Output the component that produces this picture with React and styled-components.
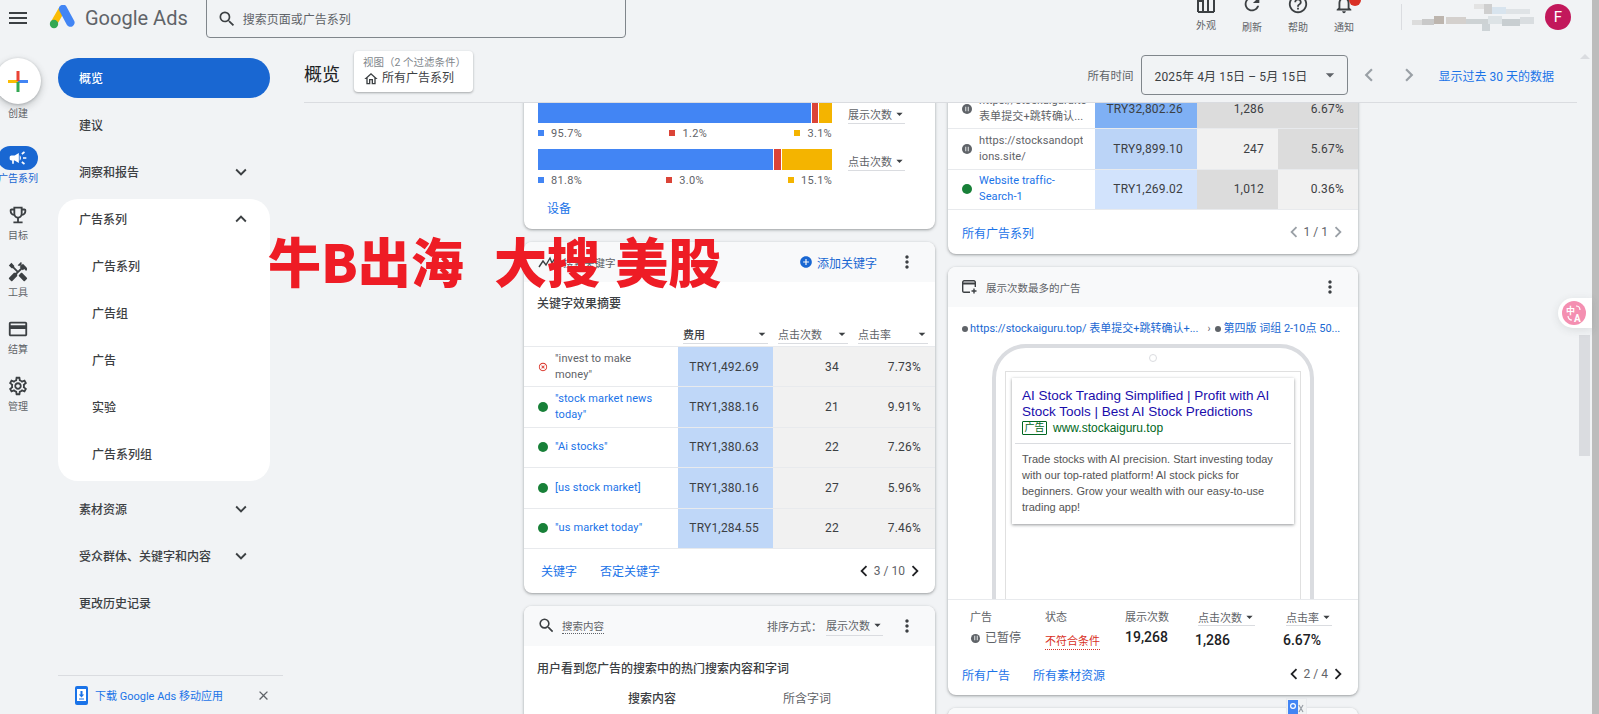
import styled, { createGlobalStyle } from 'styled-components';
import {
  MdMenu, MdSearch, MdExpandMore, MdExpandLess, MdCampaign, MdOutlineEmojiEvents, MdHandyman,
  MdOutlineCreditCard, MdOutlineSettings, MdOutlineHome, MdRefresh, MdHelpOutline,
  MdOutlineNotifications, MdMoreVert, MdAddCircle, MdChevronLeft, MdChevronRight,
  MdArrowDropDown, MdClose, MdHighlightOff, MdPause,
} from 'react-icons/md';

const FONT = `Roboto, "Noto Sans CJK SC", sans-serif`;

const GlobalStyle = createGlobalStyle`
  html, body { margin: 0; padding: 0; background: #f1f3f5; }
  body { font-family: ${FONT}; color: #3c4043; }
`;

//////// page shell ////////
const Page = styled.div`
  position: relative;
  display: flex;
  width: 1599px;
  height: 714px;
  overflow: hidden;
  background: #f1f3f5;
`;
const Viewport = styled.div`
  flex: 1;
  min-width: 0;
  display: flex;
  flex-direction: column;
`;
const BrowserScrollbar = styled.div`
  width: 7px;
  background: #bcbcbc;
`;
const ScrollThumb = styled.div`
  position: absolute;
  left: 1579px;
  top: 335px;
  width: 11px;
  height: 121px;
  background: #dadce0;
`;
const ScrollArrow = styled.div`
  position: absolute;
  left: 1580px;
  top: 54px;
  border: 5px solid transparent;
  border-top: 0;
  border-bottom: 5px solid #dadce0;
`;

//////// top bar ////////
const TopBar = styled.header`
  flex: none;
  height: 38px;
  display: flex;
  align-items: flex-start;
  padding-right: 21px;
`;
const MenuButton = styled.div`
  width: 24px;
  margin: 6px 0 0 6px;
  font-size: 24px;
  line-height: 0;
  color: #3c4043;
`;
const LogoWrap = styled.div`
  margin: 5px 0 0 19px;
  line-height: 0;
`;
const LogoText = styled.div`
  margin: 4px 0 0 10px;
  font-size: 20px;
  line-height: 28px;
  color: #5f6368;
`;
const SearchBox = styled.div`
  width: 420px;
  height: 39px;
  margin: -1px 0 0 18px;
  display: flex;
  align-items: center;
  gap: 6px;
  padding-left: 10px;
  box-sizing: border-box;
  border: 1px solid #80868b;
  border-radius: 0 0 4px 4px;
  font-size: 12px;
  color: #5f6368;
  svg { font-size: 20px; color: #3c4043; }
`;
const TopActions = styled.div`
  margin-left: auto;
  display: flex;
  align-items: flex-start;
`;
const TopAction = styled.div`
  position: relative;
  width: 46px;
  margin-top: -7px;
  display: flex;
  flex-direction: column;
  align-items: center;
  font-size: 10px;
  line-height: 14px;
  color: #5f6368;
  svg { font-size: 22px; color: #3c4043; margin-bottom: 6px; }
`;
const BellBadge = styled.span`
  position: absolute;
  left: 28px;
  top: 1px;
  width: 12px;
  height: 12px;
  border-radius: 50%;
  background: #d93025;
`;
const AccountDivider = styled.div`
  width: 1px;
  height: 26px;
  margin: 4px 10px 0 34px;
  background: #dadce0;
`;
const Avatar = styled.div`
  width: 26px;
  height: 26px;
  margin: 4px 0 0 9px;
  border-radius: 50%;
  background: #c2185b;
  color: #fff;
  font-size: 15px;
  line-height: 26px;
  text-align: center;
`;

//////// rail + nav ////////
const Body = styled.div`
  flex: 1;
  min-height: 0;
  display: flex;
`;
const Rail = styled.nav`
  flex: none;
  width: 58px;
  margin-left: -2px;
  margin-right: 2px;
  padding-top: 20px;
`;
const CreateButton = styled.div`
  width: 46px;
  height: 46px;
  margin-left: -3px;
  border-radius: 50%;
  background: #fff;
  box-shadow: 0 1px 3px rgba(60, 64, 67, .3), 0 3px 6px 2px rgba(60, 64, 67, .15);
  display: flex;
  align-items: center;
  justify-content: center;
`;
const RailLabel = styled.div`
  width: 40px;
  font-size: 10px;
  line-height: 18px;
  text-align: center;
  white-space: nowrap;
  color: ${(p) => (p.$active ? '#1967d2' : '#5f6368')};
`;
const CreateLabel = styled(RailLabel)`
  margin: 1px 0 23px;
`;
const RailItem = styled.div`
  height: 57px;
`;
const RailIcon = styled.div`
  width: 40px;
  height: 24px;
  border-radius: 12px;
  display: flex;
  align-items: center;
  justify-content: center;
  font-size: ${(p) => (p.$active ? '20px' : '22px')};
  color: ${(p) => (p.$active ? '#fff' : '#3c4043')};
  background: ${(p) => (p.$active ? '#1967d2' : 'transparent')};
`;
const Nav = styled.nav`
  flex: none;
  width: 225px;
  padding-top: 20px;
  display: flex;
  flex-direction: column;
`;
const NavList = styled.div`
  width: 212px;
  display: flex;
  flex-direction: column;
  gap: 7px;
`;
const NavRow = styled.div`
  height: 40px;
  flex: none;
  display: flex;
  align-items: center;
  justify-content: space-between;
  box-sizing: border-box;
  padding: 0 18px 1px ${(p) => (p.$sub ? '34px' : '21px')};
  border-radius: 20px;
  font-size: 12px;
  font-weight: 500;
  color: ${(p) => (p.$active ? '#fff' : '#3c4043')};
  background: ${(p) => (p.$active ? '#1967d2' : 'transparent')};
  svg { font-size: 22px; color: #3c4043; }
`;
const NavPanel = styled.div`
  display: flex;
  flex-direction: column;
  gap: 7px;
  padding-bottom: 7px;
  margin-bottom: 1px;
  background: #fff;
  border-radius: 20px;
`;
const NavFooter = styled.div`
  margin-top: auto;
  height: 38px;
  flex: none;
  display: flex;
  align-items: center;
  gap: 7px;
  padding-left: 17px;
  border-top: 1px solid #dadce0;
  font-size: 11px;
  color: #1a73e8;
`;
const NavFooterClose = styled.span`
  margin-left: 26px;
  display: flex;
  font-size: 15px;
  color: #5f6368;
`;

//////// main header ////////
const Main = styled.main`
  flex: 1;
  min-width: 0;
  display: flex;
  flex-direction: column;
`;
const TitleBar = styled.div`
  flex: none;
  height: 64px;
  margin: 0 15px 0 21px;
  display: flex;
  align-items: flex-start;
  border-bottom: 1px solid #dadce0;
`;
const PageTitle = styled.h1`
  margin: 24px 14px 0 0;
  font-size: 18px;
  line-height: 26px;
  font-weight: 400;
  color: #202124;
`;
const ViewChip = styled.div`
  width: 119px;
  height: 41px;
  margin-top: 13px;
  box-sizing: border-box;
  padding: 5px 9px;
  background: #fff;
  border-radius: 4px;
  box-shadow: 0 1px 2px rgba(60, 64, 67, .3), 0 1px 3px rgba(60, 64, 67, .15);
`;
const ViewLabel = styled.div`
  font-size: 10.5px;
  line-height: 14px;
  color: #80868b;
  white-space: nowrap;
`;
const ViewValue = styled.div`
  display: flex;
  align-items: center;
  gap: 3px;
  font-size: 12px;
  line-height: 17px;
  color: #3c4043;
  white-space: nowrap;
  svg { font-size: 16px; }
`;
const DateGroup = styled.div`
  margin: 17px 23px 0 auto;
  height: 40px;
  display: flex;
  align-items: center;
`;
const DateLabel = styled.span`
  font-size: 11.5px;
  color: #5f6368;
`;
const DateSelect = styled.div`
  width: 207px;
  height: 40px;
  margin: 0 1px 0 7px;
  box-sizing: border-box;
  padding: 0 7px 0 13px;
  display: flex;
  align-items: center;
  justify-content: space-between;
  border: 1px solid #80868b;
  border-radius: 4px;
  font-size: 12px;
  letter-spacing: .12px;
  color: #3c4043;
  white-space: nowrap;
  svg { font-size: 20px; color: #5f6368; }
`;
const DateNav = styled.span`
  display: flex;
  justify-content: center;
  width: 40px;
  font-size: 26px;
  margin-right: ${(p) => (p.$last ? '10px' : '0')};
  color: #9aa0a6;
`;
const TextLink = styled.a`
  font-size: 12px;
  color: #1a73e8;
  white-space: nowrap;
`;

//////// scrolling cards ////////
const Scroller = styled.div`
  flex: 1;
  min-height: 0;
  overflow: hidden;
  display: flex;
  align-items: flex-start;
  gap: 13px;
  padding-left: 241px;
`;
const LeftColumn = styled.div`
  flex: none;
  width: 411px;
  margin-top: -21px;
  display: flex;
  flex-direction: column;
  gap: 13px;
`;
const RightColumn = styled.div`
  flex: none;
  width: 410px;
  margin-top: -14px;
  display: flex;
  flex-direction: column;
  gap: 13px;
`;
const Card = styled.section`
  flex: none;
  background: #fff;
  border-radius: 8px;
  overflow: hidden;
  box-shadow: 0 1px 2px rgba(60, 64, 67, .3), 0 1px 3px 1px rgba(60, 64, 67, .15);
`;
const CardHeader = styled.div`
  height: 40px;
  display: flex;
  align-items: center;
  padding: 0 18px 0 ${(p) => p.$left || '14px'};
  background: #f8f9fa;
  font-size: 10.5px;
  color: #5f6368;
`;
const HeaderIcon = styled.span`
  display: flex;
  margin-right: ${(p) => p.$gap || '6px'};
  font-size: 19px;
  color: #3c4043;
`;
const Kebab = styled.span`
  display: flex;
  margin-left: ${(p) => p.$left || '14px'};
  font-size: 20px;
  color: #3c4043;
`;
const AddKeyword = styled.span`
  margin-left: auto;
  margin-right: 6px;
  display: flex;
  align-items: center;
  gap: 4px;
  font-size: 12px;
  color: #1967d2;
  svg { font-size: 14px; }
`;
const DottedTitle = styled.span`
  font-size: 10.5px;
  border-bottom: 1px dotted #5f6368;
`;
const SortLabel = styled.span`
  margin-left: auto;
  margin-right: 4px;
  font-size: 11px;
  color: #5f6368;
`;
const CardFooter = styled.div`
  height: ${(p) => p.$h || '44px'};
  box-sizing: border-box;
  display: flex;
  align-items: center;
  gap: 23px;
  padding: 0 10px ${(p) => p.$bottom || '0'} ${(p) => p.$left || '14px'};
  font-size: 12px;
  color: #1a73e8;
`;
const Pager = styled.div`
  margin-left: auto;
  display: flex;
  align-items: center;
  font-size: 12px;
  color: #5f6368;
  svg {
    margin: 0 -1px;
    font-size: 22px;
    color: ${(p) => (p.$off ? '#9aa0a6' : '#202124')};
  }
`;

//////// split bars ////////
const SplitBody = styled.div`
  padding: 20px 14px 0;
`;
const SplitRow = styled.div`
  display: flex;
  align-items: flex-start;
  gap: 16px;
  margin-bottom: 6px;
  &:last-child { margin-bottom: 0; }
`;
const SplitChart = styled.div`
  width: 294px;
`;
const SplitBar = styled.div`
  height: 21px;
  display: flex;
  gap: 1px;
`;
const Segment = styled.div`
  background: ${(p) => p.$color};
`;
const Legend = styled.div`
  height: 20px;
  display: flex;
  align-items: center;
  justify-content: space-between;
`;
const LegendItem = styled.div`
  display: flex;
  align-items: center;
  gap: 7px;
  font-size: 11px;
  letter-spacing: .3px;
  color: #5f6368;
`;
const LegendDot = styled.i`
  width: 6px;
  height: 6px;
  background: ${(p) => p.$color};
`;
const MiniSelect = styled.div`
  width: ${(p) => p.$w || '57px'};
  height: 19px;
  display: flex;
  align-items: center;
  justify-content: space-between;
  border-bottom: 1px solid #dadce0;
  font-size: 11px;
  font-weight: ${(p) => (p.$strong ? 500 : 400)};
  color: ${(p) => (p.$strong ? '#3c4043' : '#5f6368')};
  white-space: nowrap;
  svg { font-size: 16px; color: #3c4043; margin-right: -2px; }
`;
const BarSelect = styled(MiniSelect)`
  margin-top: 2px;
`;

//////// tables ////////
const TableTitle = styled.div`
  height: 42px;
  padding-left: 13px;
  font-size: 12px;
  font-weight: 500;
  line-height: 44px;
  color: #3c4043;
`;
const TableHead = styled.div`
  height: 22px;
  display: flex;
  align-items: flex-start;
  gap: 10px;
  padding-left: 159px;
  border-bottom: 1px solid #e8eaed;
`;
const Row = styled.div`
  height: 40.4px;
  display: grid;
  grid-template-columns: ${(p) => p.$cols};
  grid-template-rows: 100%;
  box-sizing: border-box;
  border-bottom: 1px solid #e8eaed;
`;
const NameCell = styled.div`
  display: flex;
  align-items: center;
  gap: 7px;
  padding: 0 ${(p) => p.$right || '14px'} 0 14px;
  min-width: 0;
  font-size: 11px;
  letter-spacing: .1px;
  line-height: 16px;
  color: ${(p) => (p.$link ? '#1a73e8' : '#5f6368')};
`;
const NameText = styled.div`
  min-width: 0;
  overflow-wrap: anywhere;
`;
const NameLine = styled.div`
  white-space: nowrap;
  overflow: hidden;
`;
const HeatCell = styled.div`
  display: flex;
  align-items: center;
  justify-content: flex-end;
  padding-right: 14px;
  background: ${(p) => p.$bg};
  font-size: 12px;
  letter-spacing: .2px;
  color: #3c4043;
`;
const GreenDot = styled.i`
  flex: none;
  width: 10px;
  height: 10px;
  border-radius: 50%;
  background: #188038;
`;
const PausedDot = styled.i`
  flex: none;
  width: ${(p) => p.$size || '10px'};
  height: ${(p) => p.$size || '10px'};
  border-radius: 50%;
  background: #5f6368;
  display: inline-flex;
  align-items: center;
  justify-content: center;
  font-size: 8px;
  color: #c4c7c9;
`;
const RemovedIcon = styled.span`
  flex: none;
  display: flex;
  width: 10px;
  justify-content: center;
  font-size: 14px;
  color: #d93025;
`;

//////// search card ////////
const SearchBodyTitle = styled.div`
  padding: 14px 13px 0;
  font-size: 12px;
  font-weight: 500;
  line-height: 18px;
  color: #3c4043;
`;
const SearchTabs = styled.div`
  display: flex;
  padding: 12px 0 40px 104px;
  gap: 107px;
  font-size: 12px;
  line-height: 18px;
  color: #5f6368;
`;
const SearchTab = styled.span`
  font-weight: ${(p) => (p.$on ? 500 : 400)};
  color: ${(p) => (p.$on ? '#3c4043' : '#5f6368')};
`;

//////// ad preview ////////
const Crumbs = styled.div`
  height: 37px;
  box-sizing: border-box;
  padding: 15px 0 0 14px;
  display: flex;
  align-items: flex-start;
  font-size: 11px;
  line-height: 14px;
  color: #1967d2;
  white-space: nowrap;
`;
const CrumbDot = styled.i`
  flex: none;
  width: 6px;
  height: 6px;
  margin: 4px 2px 0 0;
  border-radius: 50%;
  background: #5f6368;
`;
const CrumbSep = styled.span`
  margin: 0 5px 0 9px;
  font-size: 10px;
  color: #5f6368;
`;
const PhoneStage = styled.div`
  height: 255px;
  overflow: hidden;
  border-bottom: 1px solid #e8eaed;
`;
const Phone = styled.div`
  width: 322px;
  height: 320px;
  margin: 0 auto;
  box-sizing: border-box;
  border: 4px solid #dadce0;
  border-radius: 34px 34px 0 0;
  padding-top: 6px;
`;
const Camera = styled.div`
  width: 8px;
  height: 8px;
  margin: 0 auto 9px;
  box-sizing: border-box;
  border: 1px solid #dadce0;
  border-radius: 50%;
`;
const PhoneScreen = styled.div`
  width: 296px;
  height: 260px;
  margin: 0 auto;
  box-sizing: border-box;
  padding: 6px;
  border: 1px solid #e0e0e0;
`;
const AdCard = styled.div`
  box-sizing: border-box;
  height: 146px;
  padding: 10px 10px 0;
  font-family: "Liberation Sans", Arial, sans-serif;
  box-shadow: 0 1px 3px rgba(60, 64, 67, .55);
`;
const AdTitle = styled.div`
  font-size: 13.5px;
  line-height: 16px;
  color: #1a0dab;
`;
const AdUrlRow = styled.div`
  display: flex;
  align-items: center;
  gap: 6px;
  height: 16px;
  font-size: 12px;
  color: #006621;
`;
const AdBadge = styled.span`
  width: 25px;
  height: 14px;
  box-sizing: border-box;
  border: 1px solid #006621;
  border-radius: 1px;
  font-family: ${FONT};
  font-size: 10px;
  line-height: 12px;
  text-align: center;
`;
const AdRule = styled.div`
  height: 1px;
  margin: 7px -7px;
  background: #dadce0;
`;
const AdDescription = styled.div`
  font-size: 11px;
  line-height: 16px;
  color: #545454;
`;
const Stats = styled.div`
  height: 53px;
  box-sizing: border-box;
  display: grid;
  grid-template-columns: 75px 80px 70px 88px 1fr;
  padding: 10px 0 0 22px;
`;
const StatCol = styled.div`
  display: flex;
  flex-direction: column;
  font-size: 11px;
  color: #5f6368;
`;
const StatLabel = styled.div`
  height: 16px;
  line-height: 16px;
`;
const StatSelect = styled(MiniSelect)`
  margin: -2px 0 0 ${(p) => p.$shift || '0'};
  height: 17px;
`;
const PausedValue = styled.div`
  margin-top: 3px;
  display: flex;
  align-items: center;
  gap: 5px;
  padding-left: 1px;
  font-size: 12px;
  line-height: 18px;
`;
const BadStatus = styled.div`
  align-self: flex-start;
  margin-top: 8px;
  font-size: 11px;
  line-height: 15px;
  color: #d93025;
  border-bottom: 1px dotted #d93025;
`;
const StatValue = styled.div`
  margin-top: ${(p) => p.$top || '2px'};
  margin-left: ${(p) => p.$shift || '0'};
  font-size: 14px;
  font-weight: 500;
  line-height: 18px;
  color: #202124;
`;

//////// things that lie over the page ////////
const Watermark = styled.div`
  position: absolute;
  left: 268px;
  top: 231px;
  font-family: "Noto Sans CJK SC", sans-serif;
  font-size: 53px;
  line-height: 58px;
  font-weight: 900;
  word-spacing: 3px;
  color: #ee1c25;
  white-space: pre;
`;
const TranslatePill = styled.div`
  position: absolute;
  left: 1558px;
  top: 298px;
  width: 34px;
  height: 30px;
  box-sizing: border-box;
  padding: 3px 0 0 4px;
  line-height: 0;
  background: #fff;
  border-radius: 15px 0 0 15px;
  box-shadow: 0 2px 8px rgba(60, 64, 67, .12);
`;
const GTranslate = styled.div`
  position: absolute;
  left: 1286px;
  top: 698px;
  width: 19px;
  height: 16px;
  background: #f1f3f4;
  border: 1px solid #e8eaed;
  border-bottom: 0;
  line-height: 0;
`;

const NAV_TOP = [
  { label: '概览', active: true },
  { label: '建议' },
  { label: '洞察和报告', more: true },
];
const NAV_SUB = ['广告系列', '广告组', '广告', '实验', '广告系列组'];
const NAV_BOTTOM = [
  { label: '素材资源', more: true },
  { label: '受众群体、关键字和内容', more: true },
  { label: '更改历史记录' },
];
const RAIL = [
  { label: '广告系列', icon: MdCampaign, active: true },
  { label: '目标', icon: MdOutlineEmojiEvents },
  { label: '工具', icon: MdHandyman },
  { label: '结算', icon: MdOutlineCreditCard },
  { label: '管理', icon: MdOutlineSettings },
];
const TOP_ACTIONS = [
  { label: '外观', icon: AppearanceIcon },
  { label: '刷新', icon: MdRefresh },
  { label: '帮助', icon: MdHelpOutline },
  { label: '通知', icon: MdOutlineNotifications, badge: true },
];
// segment widths are the pixel lengths of the bars
const SPLITS = [
  { metric: '展示次数', parts: [273, 6, 13], text: ['95.7%', '1.2%', '3.1%'] },
  { metric: '点击次数', parts: [235, 7, 50], text: ['81.8%', '3.0%', '15.1%'] },
];
const SPLIT_COLORS = ['#4285f4', '#db4437', '#f4b400'];
const KEYWORD_COLS = '154px 95px 80px 82px';
const KEYWORDS = [
  { name: '"invest to make money"', status: 'removed', cost: 'TRY1,492.69', clicks: '34', ctr: '7.73%' },
  { name: '"stock market news today"', cost: 'TRY1,388.16', clicks: '21', ctr: '9.91%' },
  { name: '"Ai stocks"', cost: 'TRY1,380.63', clicks: '22', ctr: '7.26%' },
  { name: '[us stock market]', cost: 'TRY1,380.16', clicks: '27', ctr: '5.96%' },
  { name: '"us market today"', cost: 'TRY1,284.55', clicks: '22', ctr: '7.46%' },
];
const CAMPAIGN_COLS = '147px 102px 81px 80px';
const CAMPAIGNS = [
  { lines: ['https://stockaiguru.to', '表单提交+跳转确认...'], paused: true, cost: 'TRY32,802.26', clicks: '1,286', ctr: '6.67%', bg: ['#7fb0f4', '#dcdcdc', '#dcdcdc'] },
  { lines: ['https://stocksandopt', 'ions.site/'], paused: true, cost: 'TRY9,899.10', clicks: '247', ctr: '5.67%', bg: ['#bbd4f7', '#f1f1f1', '#dcdcdc'] },
  { name: 'Website traffic-Search-1', cost: 'TRY1,269.02', clicks: '1,012', ctr: '0.36%', bg: ['#d2e3fc', '#dcdcdc', '#f1f1f1'] },
];
// pixelated account name
const MOSAIC = [
  [62, 0, 10, 5, '#e3e3e3'], [72, 0, 8, 10, '#cfcfcf'], [80, 3, 14, 7, '#d8e4ee'], [94, 5, 24, 5, '#dfe3e6'],
  [0, 16, 10, 5, '#dcdcdc'], [10, 15, 12, 6, '#c9c9c9'], [22, 12, 10, 8, '#bdb5ae'], [34, 13, 20, 7, '#d4d0cd'], [54, 15, 22, 5, '#cdd2d4'],
  [76, 12, 14, 8, '#dde3e6'], [90, 15, 18, 7, '#c8ced1'], [108, 13, 14, 7, '#d9dde0'], [70, 20, 8, 7, '#cdd3d6'],
];

function AppearanceIcon() {
  return (
    <svg width="18" height="20" viewBox="0 0 18 20" fill="none" stroke="#3c4043" strokeWidth="2">
      <path d="M1 19V8h5v11M6 19V4h5v15M11 19V1h6v18M1 19h16" />
    </svg>
  );
}

function GoogleAdsLogo() {
  return (
    <svg width="26" height="24" viewBox="0 0 26 24">
      <path d="M9.6 3.2 2 16.4l6 3.4L15.6 6.6z" fill="#fbbc04" />
      <path d="M10.2 5.6a4.2 4.2 0 0 1 7.2-4.2l7.6 14a4.2 4.2 0 0 1-7.2 4.4z" fill="#4285f4" />
      <circle cx="5" cy="19" r="4.2" fill="#34a853" />
    </svg>
  );
}

function PlusLogo() {
  return (
    <svg width="20" height="21" viewBox="0 0 20 21">
      <rect x="0" y="9" width="10" height="3" fill="#fbbc04" />
      <rect x="10" y="9" width="10" height="3" fill="#4285f4" />
      <rect x="8.5" y="0" width="3" height="10" fill="#ea4335" />
      <rect x="8.5" y="11" width="3" height="10" fill="#34a853" />
    </svg>
  );
}

function PhoneDownloadIcon() {
  return (
    <svg width="13" height="19" viewBox="0 0 13 19">
      <rect x="0" y="0" width="13" height="19" rx="2" fill="#1a73e8" />
      <rect x="2" y="3" width="9" height="12" fill="#fff" />
      <path d="M5.5 5h2v3.5h1.7l-2.7 3-2.7-3h1.7zM4 12.5h5v1H4z" fill="#1a73e8" />
    </svg>
  );
}

function TrendIcon() {
  return (
    <svg width="22" height="14" viewBox="0 0 22 14" fill="none" stroke="#3c4043" strokeWidth="1.4">
      <path d="M1 12 5 6l3 4 4-7 2 5 3-5" />
    </svg>
  );
}

function AdWindowIcon() {
  return (
    <svg width="15" height="14" viewBox="0 0 15 14" fill="none" stroke="#3c4043" strokeWidth="1.4">
      <path d="M8 12.3H2.2a1.3 1.3 0 0 1-1.5-1.3V2.2A1.4 1.4 0 0 1 2.2.8h9.6a1.4 1.4 0 0 1 1.5 1.4V7" />
      <path d="M1 3.6h12.2" strokeWidth="2" />
      <path d="M12 8.5v5M9.5 11h5" />
    </svg>
  );
}

function TranslateMark() {
  return (
    <svg width="24" height="24" viewBox="0 0 24 24">
      <circle cx="12" cy="12" r="12" fill="#f48fb1" />
      <text x="4" y="12.5" fontSize="9" fontWeight="700" fill="#fff" fontFamily={FONT}>中</text>
      <text x="12" y="20.5" fontSize="10" fontWeight="700" fill="#fff" fontFamily={FONT}>A</text>
      <path d="M14 5c2 0 4 1.500 4 4M10 19c-2 0-4-1.500-4-4" fill="none" stroke="#fff" strokeWidth="1.200" />
    </svg>
  );
}

function NavEntry({ label, active, more }) {
  return (
    <NavRow $active={active}>
      {label}
      {more && <MdExpandMore />}
    </NavRow>
  );
}

function StatusMark({ status, paused }) {
  if (status === 'removed') {
    return <RemovedIcon><MdHighlightOff /></RemovedIcon>;
  }
  if (paused) {
    return <PausedDot><MdPause /></PausedDot>;
  }
  return <GreenDot />;
}

function App() {
  return (
    <Page>
      <GlobalStyle />
      <Viewport>
        <TopBar>
          <MenuButton><MdMenu /></MenuButton>
          <LogoWrap><GoogleAdsLogo /></LogoWrap>
          <LogoText>Google Ads</LogoText>
          <SearchBox><MdSearch />搜索页面或广告系列</SearchBox>
          <TopActions>
            {TOP_ACTIONS.map(({ label, icon: Icon, badge }) => (
              <TopAction key={label}>
                <Icon />
                {badge && <BellBadge />}
                {label}
              </TopAction>
            ))}
            <AccountDivider />
            <svg width="124" height="32" viewBox="0 0 124 32">
              {MOSAIC.map(([x, y, w, h, fill]) => (
                <rect key={`${x}-${y}`} x={x} y={y + 4} width={w} height={h} fill={fill} />
              ))}
            </svg>
            <Avatar>F</Avatar>
          </TopActions>
        </TopBar>

        <Body>
          <Rail>
            <CreateButton><PlusLogo /></CreateButton>
            <CreateLabel>创建</CreateLabel>
            {RAIL.map(({ label, icon: Icon, active }) => (
              <RailItem key={label}>
                <RailIcon $active={active}><Icon /></RailIcon>
                <RailLabel $active={active}>{label}</RailLabel>
              </RailItem>
            ))}
          </Rail>

          <Nav>
            <NavList>
              {NAV_TOP.map((item) => <NavEntry key={item.label} {...item} />)}
              <NavPanel>
                <NavRow>广告系列<MdExpandLess /></NavRow>
                {NAV_SUB.map((label) => <NavRow key={label} $sub>{label}</NavRow>)}
              </NavPanel>
              {NAV_BOTTOM.map((item) => <NavEntry key={item.label} {...item} />)}
            </NavList>
            <NavFooter>
              <PhoneDownloadIcon />
              下载 Google Ads 移动应用
              <NavFooterClose><MdClose /></NavFooterClose>
            </NavFooter>
          </Nav>

          <Main>
            <TitleBar>
              <PageTitle>概览</PageTitle>
              <ViewChip>
                <ViewLabel>视图（2 个过滤条件）</ViewLabel>
                <ViewValue><MdOutlineHome />所有广告系列</ViewValue>
              </ViewChip>
              <DateGroup>
                <DateLabel>所有时间</DateLabel>
                <DateSelect>2025年 4月 15日 – 5月 15日<MdArrowDropDown /></DateSelect>
                <DateNav><MdChevronLeft /></DateNav>
                <DateNav $last><MdChevronRight /></DateNav>
                <TextLink>显示过去 30 天的数据</TextLink>
              </DateGroup>
            </TitleBar>

            <Scroller>
              <LeftColumn>
                <Card>
                  <SplitBody>
                    {SPLITS.map((split) => (
                      <SplitRow key={split.metric}>
                        <SplitChart>
                          <SplitBar>
                            {split.parts.map((part, i) => (
                              <Segment key={i} $color={SPLIT_COLORS[i]} style={{ flexGrow: part }} />
                            ))}
                          </SplitBar>
                          <Legend>
                            {split.text.map((text, i) => (
                              <LegendItem key={i}>
                                <LegendDot $color={SPLIT_COLORS[i]} />
                                {text}
                              </LegendItem>
                            ))}
                          </Legend>
                        </SplitChart>
                        <BarSelect>{split.metric}<MdArrowDropDown /></BarSelect>
                      </SplitRow>
                    ))}
                  </SplitBody>
                  <CardFooter $h="39px" $left="23px" $bottom="5px">设备</CardFooter>
                </Card>

                <Card>
                  <CardHeader>
                    <HeaderIcon $gap="3px"><TrendIcon /></HeaderIcon>
                    搜索关键字
                    <AddKeyword><MdAddCircle />添加关键字</AddKeyword>
                    <Kebab><MdMoreVert /></Kebab>
                  </CardHeader>
                  <TableTitle>关键字效果摘要</TableTitle>
                  <TableHead>
                    <MiniSelect $w="85px" $strong>费用<MdArrowDropDown /></MiniSelect>
                    <MiniSelect $w="70px">点击次数<MdArrowDropDown /></MiniSelect>
                    <MiniSelect $w="70px">点击率<MdArrowDropDown /></MiniSelect>
                  </TableHead>
                  {KEYWORDS.map((kw) => (
                    <Row key={kw.name} $cols={KEYWORD_COLS}>
                      <NameCell $link={kw.status !== 'removed'}>
                        <StatusMark status={kw.status} />
                        <NameText>{kw.name}</NameText>
                      </NameCell>
                      <HeatCell $bg="#bfd7f8">{kw.cost}</HeatCell>
                      <HeatCell $bg="#f1f1f1">{kw.clicks}</HeatCell>
                      <HeatCell $bg="#f1f1f1">{kw.ctr}</HeatCell>
                    </Row>
                  ))}
                  <CardFooter $left="17px">
                    <span>关键字</span>
                    <span>否定关键字</span>
                    <Pager><MdChevronLeft />3 / 10<MdChevronRight /></Pager>
                  </CardFooter>
                </Card>

                <Card>
                  <CardHeader $left="13px">
                    <HeaderIcon><MdSearch /></HeaderIcon>
                    <DottedTitle>搜索内容</DottedTitle>
                    <SortLabel>排序方式：</SortLabel>
                    <MiniSelect $w="57px">展示次数<MdArrowDropDown /></MiniSelect>
                    <Kebab><MdMoreVert /></Kebab>
                  </CardHeader>
                  <SearchBodyTitle>用户看到您广告的搜索中的热门搜索内容和字词</SearchBodyTitle>
                  <SearchTabs>
                    <SearchTab $on>搜索内容</SearchTab>
                    <SearchTab>所含字词</SearchTab>
                  </SearchTabs>
                </Card>
              </LeftColumn>

              <RightColumn>
                <Card>
                  {CAMPAIGNS.map((c) => (
                    <Row key={c.cost} $cols={CAMPAIGN_COLS}>
                      <NameCell $link={!c.paused} $right="8px">
                        <StatusMark paused={c.paused} />
                        <NameText>
                          {c.lines ? c.lines.map((line) => <NameLine key={line}>{line}</NameLine>) : c.name}
                        </NameText>
                      </NameCell>
                      <HeatCell $bg={c.bg[0]}>{c.cost}</HeatCell>
                      <HeatCell $bg={c.bg[1]}>{c.clicks}</HeatCell>
                      <HeatCell $bg={c.bg[2]}>{c.ctr}</HeatCell>
                    </Row>
                  ))}
                  <CardFooter>
                    <span>所有广告系列</span>
                    <Pager $off><MdChevronLeft />1 / 1<MdChevronRight /></Pager>
                  </CardFooter>
                </Card>

                <Card>
                  <CardHeader>
                    <HeaderIcon $gap="9px"><AdWindowIcon /></HeaderIcon>
                    展示次数最多的广告
                    <Kebab $left="auto"><MdMoreVert /></Kebab>
                  </CardHeader>
                  <Crumbs>
                    <CrumbDot />
                    https://stockaiguru.top/ 表单提交+跳转确认+...
                    <CrumbSep>›</CrumbSep>
                    <CrumbDot />
                    第四版 词组 2-10点 50...
                  </Crumbs>
                  <PhoneStage>
                    <Phone>
                      <Camera />
                      <PhoneScreen>
                        <AdCard>
                          <AdTitle>AI Stock Trading Simplified | Profit with AI Stock Tools | Best AI Stock Predictions</AdTitle>
                          <AdUrlRow><AdBadge>广告</AdBadge>www.stockaiguru.top</AdUrlRow>
                          <AdRule />
                          <AdDescription>
                            Trade stocks with AI precision. Start investing today with our top-rated platform! AI stock picks for beginners. Grow your wealth with our easy-to-use trading app!
                          </AdDescription>
                        </AdCard>
                      </PhoneScreen>
                    </Phone>
                  </PhoneStage>
                  <Stats>
                    <StatCol>
                      <StatLabel>广告</StatLabel>
                      <PausedValue><PausedDot $size="9px"><MdPause /></PausedDot>已暂停</PausedValue>
                    </StatCol>
                    <StatCol>
                      <StatLabel>状态</StatLabel>
                      <BadStatus>不符合条件</BadStatus>
                    </StatCol>
                    <StatCol>
                      <StatLabel>展示次数</StatLabel>
                      <StatValue>19,268</StatValue>
                    </StatCol>
                    <StatCol>
                      <StatSelect $shift="3px">点击次数<MdArrowDropDown /></StatSelect>
                      <StatValue $top="5px">1,286</StatValue>
                    </StatCol>
                    <StatCol>
                      <StatSelect $w="46px" $shift="3px">点击率<MdArrowDropDown /></StatSelect>
                      <StatValue $top="5px">6.67%</StatValue>
                    </StatCol>
                  </Stats>
                  <CardFooter $h="42px">
                    <span>所有广告</span>
                    <span>所有素材资源</span>
                    <Pager><MdChevronLeft />2 / 4<MdChevronRight /></Pager>
                  </CardFooter>
                </Card>

                <Card>
                  <CardHeader />
                </Card>
              </RightColumn>
            </Scroller>
          </Main>
        </Body>
      </Viewport>
      <BrowserScrollbar />

      <ScrollArrow />
      <ScrollThumb />
      <TranslatePill><TranslateMark /></TranslatePill>
      <GTranslate>
        <svg width="17" height="15" viewBox="0 0 17 15">
          <rect x="1" y="1" width="10" height="14" fill="#4285f4" />
          <circle cx="6" cy="7" r="2.4" fill="none" stroke="#fff" strokeWidth="1.2" />
          <path d="M12 6l4 7M16 6l-4 7" stroke="#9aa0a6" strokeWidth="1.2" />
        </svg>
      </GTranslate>
      <Watermark>牛B出海  大搜 美股</Watermark>
    </Page>
  );
}

export default App;
